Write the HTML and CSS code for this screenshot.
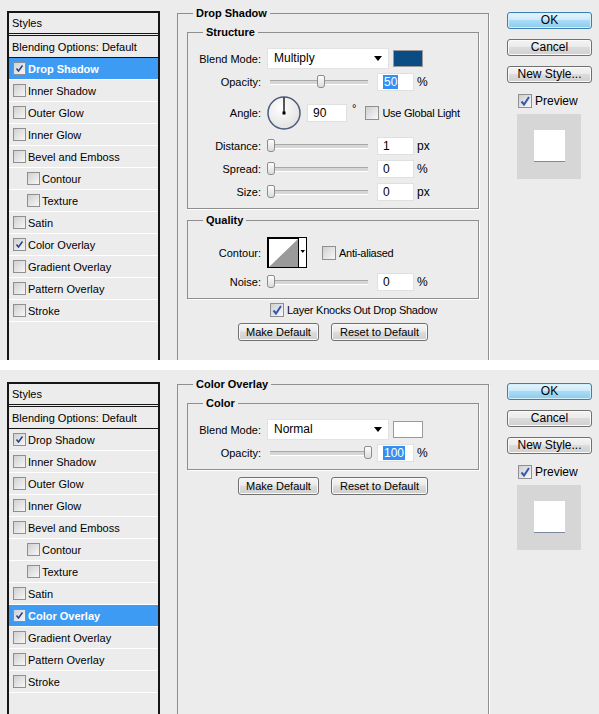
FILE: index.html
```html
<!DOCTYPE html>
<html>
	<head>
		<title>Layer Style</title>
		<link rel="stylesheet" href="styles.css">
	</head>
	<body>
		<!-- Drop Shadow page -->
		<div class="dialog first">
			<div class="styles-list">
				<div class="list-head">Styles</div>
				<div class="list-item blending">Blending Options: Default</div>
				<div class="list-item selected"><span class="cb"><svg width="11" height="11" viewBox="0 0 11 11"><path d="M2.5 5.5 L4.5 8 L8.5 2.5" fill="none" stroke="#27408b" stroke-width="1.5"/></svg></span>Drop Shadow</div>
				<div class="list-item"><span class="cb"></span>Inner Shadow</div>
				<div class="list-item"><span class="cb"></span>Outer Glow</div>
				<div class="list-item"><span class="cb"></span>Inner Glow</div>
				<div class="list-item"><span class="cb"></span>Bevel and Emboss</div>
				<div class="list-item indent"><span class="cb"></span>Contour</div>
				<div class="list-item indent"><span class="cb"></span>Texture</div>
				<div class="list-item"><span class="cb"></span>Satin</div>
				<div class="list-item"><span class="cb"><svg width="11" height="11" viewBox="0 0 11 11"><path d="M2.5 5.5 L4.5 8 L8.5 2.5" fill="none" stroke="#27408b" stroke-width="1.5"/></svg></span>Color Overlay</div>
				<div class="list-item"><span class="cb"></span>Gradient Overlay</div>
				<div class="list-item"><span class="cb"></span>Pattern Overlay</div>
				<div class="list-item"><span class="cb"></span>Stroke</div>
			</div>

			<div class="main">
				<fieldset class="group">
					<legend>Drop Shadow</legend>

					<fieldset class="sub">
						<legend>Structure</legend>
						<div class="row blend-row">
							<label>Blend Mode:</label>
							<div class="select">Multiply<span class="arrow"></span></div>
							<span class="swatch blue"></span>
						</div>
						<div class="row opacity-row">
							<label>Opacity:</label>
							<div class="slider"><span class="thumb" style="left:50px"></span></div>
							<span class="field"><span class="sel">50</span></span>
							<span class="unit">%</span>
						</div>
						<div class="row angle-row">
							<label>Angle:</label>
							<svg class="dial" width="34" height="34" viewBox="0 0 34 34">
								<defs>
									<radialGradient id="dialfill" cx="40%" cy="35%" r="70%">
										<stop offset="0" stop-color="#ffffff"/>
										<stop offset="1" stop-color="#e0e0e0"/>
									</radialGradient>
								</defs>
								<circle cx="17" cy="17" r="16" fill="url(#dialfill)" stroke="#4b5b7c" stroke-width="1.5"/>
								<line x1="17" y1="17" x2="17" y2="1.5" stroke="#000" stroke-width="1.3"/>
								<rect x="15.5" y="15.5" width="3" height="3" fill="#000"/>
							</svg>
							<span class="field wide">90</span>
							<span class="deg">°</span>
							<span class="check global"></span>
							<span class="check-label">Use Global Light</span>
						</div>
						<div class="row slider-row first-slider">
							<label>Distance:</label>
							<div class="slider"><span class="thumb" style="left:0px"></span></div>
							<span class="field">1</span>
							<span class="unit">px</span>
						</div>
						<div class="row slider-row">
							<label>Spread:</label>
							<div class="slider"><span class="thumb" style="left:0px"></span></div>
							<span class="field">0</span>
							<span class="unit">%</span>
						</div>
						<div class="row slider-row">
							<label>Size:</label>
							<div class="slider"><span class="thumb" style="left:0px"></span></div>
							<span class="field">0</span>
							<span class="unit">px</span>
						</div>
					</fieldset>

					<fieldset class="sub quality">
						<legend>Quality</legend>
						<div class="row contour-row">
							<label>Contour:</label>
							<svg class="contour" width="40" height="31" viewBox="0 0 40 31">
								<rect x="0.5" y="0.5" width="39" height="30" fill="#fff" stroke="#000"/>
								<rect x="1" y="1" width="30" height="1" fill="#000"/>
								<rect x="1" y="1" width="1" height="29" fill="#000"/>
								<polygon points="2,30 31,2 31,30" fill="#9a9a9a"/>
								<line x1="31.5" y1="1" x2="31.5" y2="30" stroke="#000"/>
								<polygon points="33.5,13 38,13 35.75,16" fill="#000"/>
							</svg>
							<span class="check aa"></span>
							<span class="check-label">Anti-aliased</span>
						</div>
						<div class="row slider-row">
							<label>Noise:</label>
							<div class="slider"><span class="thumb" style="left:0px"></span></div>
							<span class="field">0</span>
							<span class="unit">%</span>
						</div>
					</fieldset>

					<div class="knock-row">
						<span class="check"><svg width="12" height="12" viewBox="0 0 12 12"><path d="M2.5 6.5 L5 9.5 L10 2" fill="none" stroke="#3658ad" stroke-width="2"/></svg></span>
						<span class="check-label">Layer Knocks Out Drop Shadow</span>
					</div>
					<div class="button-row">
						<button class="btn make">Make Default</button>
						<button class="btn reset">Reset to Default</button>
					</div>
				</fieldset>
			</div>

			<div class="side">
				<button class="btn default">OK</button>
				<button class="btn">Cancel</button>
				<button class="btn">New Style...</button>
				<div class="preview-row">
					<span class="check"><svg width="12" height="12" viewBox="0 0 12 12"><path d="M2.5 6.5 L5 9.5 L10 2" fill="none" stroke="#3658ad" stroke-width="2"/></svg></span>
					<span class="preview-label">Preview</span>
				</div>
				<div class="preview"><div class="preview-square"></div></div>
			</div>
		</div>

		<!-- Color Overlay page -->
		<div class="dialog">
			<div class="styles-list">
				<div class="list-head">Styles</div>
				<div class="list-item blending">Blending Options: Default</div>
				<div class="list-item"><span class="cb"><svg width="11" height="11" viewBox="0 0 11 11"><path d="M2.5 5.5 L4.5 8 L8.5 2.5" fill="none" stroke="#27408b" stroke-width="1.5"/></svg></span>Drop Shadow</div>
				<div class="list-item"><span class="cb"></span>Inner Shadow</div>
				<div class="list-item"><span class="cb"></span>Outer Glow</div>
				<div class="list-item"><span class="cb"></span>Inner Glow</div>
				<div class="list-item"><span class="cb"></span>Bevel and Emboss</div>
				<div class="list-item indent"><span class="cb"></span>Contour</div>
				<div class="list-item indent"><span class="cb"></span>Texture</div>
				<div class="list-item"><span class="cb"></span>Satin</div>
				<div class="list-item selected"><span class="cb"><svg width="11" height="11" viewBox="0 0 11 11"><path d="M2.5 5.5 L4.5 8 L8.5 2.5" fill="none" stroke="#27408b" stroke-width="1.5"/></svg></span>Color Overlay</div>
				<div class="list-item"><span class="cb"></span>Gradient Overlay</div>
				<div class="list-item"><span class="cb"></span>Pattern Overlay</div>
				<div class="list-item"><span class="cb"></span>Stroke</div>
			</div>

			<div class="main">
				<fieldset class="group">
					<legend>Color Overlay</legend>

					<fieldset class="sub">
						<legend>Color</legend>
						<div class="row blend-row">
							<label>Blend Mode:</label>
							<div class="select">Normal<span class="arrow"></span></div>
							<span class="swatch"></span>
						</div>
						<div class="row opacity-row">
							<label>Opacity:</label>
							<div class="slider"><span class="thumb" style="left:97px"></span></div>
							<span class="field"><span class="sel">100</span></span>
							<span class="unit">%</span>
						</div>
					</fieldset>

					<div class="button-row short">
						<button class="btn make">Make Default</button>
						<button class="btn reset">Reset to Default</button>
					</div>
				</fieldset>
			</div>

			<div class="side">
				<button class="btn default">OK</button>
				<button class="btn">Cancel</button>
				<button class="btn">New Style...</button>
				<div class="preview-row">
					<span class="check"><svg width="12" height="12" viewBox="0 0 12 12"><path d="M2.5 6.5 L5 9.5 L10 2" fill="none" stroke="#3658ad" stroke-width="2"/></svg></span>
					<span class="preview-label">Preview</span>
				</div>
				<div class="preview"><div class="preview-square"></div></div>
			</div>
		</div>
	</body>
</html>
```

FILE: styles.css
```css
* {
	box-sizing: border-box;
}

body {
	margin: 0;
	background-color: #fff;
	font-family: "Liberation Sans", Arial, sans-serif;
	font-size: 11px;
	color: #000;
}

.dialog {
	display: flex;
	align-items: flex-start;
	height: 344px;
	overflow: hidden;
	background-color: #ececec;
}

.dialog.first {
	height: 361px;
	margin-top: -1px;
	margin-bottom: 10px;
}

/* left column */
.styles-list {
	margin: 12px 0 0 7px;
	width: 153px;
	height: 420px;
	border: 2px solid #161616;
	border-bottom: none;
}

.list-head {
	height: 23px;
	line-height: 20px;
	padding-left: 3px;
	border-bottom: 3px double #161616;
}

.list-item {
	display: flex;
	align-items: center;
	height: 22px;
	padding-left: 4px;
	border-bottom: 1px solid #fff;
}

.list-item.blending {
	padding-left: 3px;
	border-bottom-color: #161616;
}

.list-item.indent {
	padding-left: 18px;
}

.list-item.selected {
	background-color: #3d9bf3;
	color: #fff;
	font-weight: bold;
}

.cb {
	display: flex;
	align-items: center;
	justify-content: center;
	flex-shrink: 0;
	width: 13px;
	height: 13px;
	margin-right: 2px;
	border: 1px solid #8f8f8f;
	background: linear-gradient(135deg, #d0d0d0, #f7f7f7);
}

/* group boxes */
.main {
	margin: 7px 0 0 17px;
	width: 312px;
}

fieldset {
	margin: 0;
	min-width: 0;
	border: 1px solid #8e8e8e;
	box-shadow: 1px 1px 0 #fff;
}

legend {
	font-weight: bold;
	line-height: 14px;
	padding: 0 3px;
}

.group {
	height: 420px;
	padding: 0 9px;
}

.group > legend {
	margin-left: 6px;
}

.sub {
	margin-top: 5px;
	padding: 9px 0 7px 0;
}

.sub > legend {
	margin-left: 15px;
}

.sub.quality {
	margin-top: 4px;
	padding-top: 10px;
}

.row {
	display: flex;
	align-items: center;
	height: 19px;
	margin-top: 4px;
}

.row label {
	width: 73px;
	margin-right: 6px;
	text-align: right;
	flex-shrink: 0;
}

.blend-row {
	height: 21px;
	margin-top: 0;
}

.opacity-row {
	margin-top: 3px;
}

.angle-row {
	height: 34px;
	margin-top: 5px;
}

.first-slider {
	margin-top: 6px;
}

.contour-row {
	height: 31px;
	margin-top: 0;
}

/* controls */
.select {
	position: relative;
	width: 122px;
	height: 21px;
	line-height: 19px;
	padding-left: 6px;
	font-size: 12px;
	background-color: #fff;
	border: 1px solid #e2e2e2;
}

.arrow {
	position: absolute;
	right: 6px;
	top: 7px;
	border-left: 4px solid transparent;
	border-right: 4px solid transparent;
	border-top: 5px solid #000;
}

.swatch {
	width: 30px;
	height: 17px;
	margin-left: 4px;
	background-color: #fff;
	border: 1px solid #9a9a9a;
}

.swatch.blue {
	background-color: #0b4c85;
}

.slider {
	position: relative;
	width: 104px;
	height: 13px;
}

.slider::before {
	content: "";
	position: absolute;
	left: 3px;
	right: 3px;
	top: 5px;
	height: 3px;
	border-top: 1px solid #a8a8a8;
	border-bottom: 1px solid #fff;
	background-color: #d6d6d6;
}

.thumb {
	position: absolute;
	top: 0;
	width: 8px;
	height: 13px;
	border: 1px solid #8c8c8c;
	border-radius: 2px 2px 3px 3px;
	background: linear-gradient(#fdfdfd, #dcdcdc);
}

.field {
	width: 37px;
	height: 18px;
	margin-left: 6px;
	padding-left: 5px;
	line-height: 16px;
	font-size: 12px;
	background-color: #fff;
	border: 1px solid #e0e0e0;
}

.field.wide {
	width: 40px;
	margin-left: 6px;
}

.sel {
	background-color: #3390f0;
	color: #fff;
	padding: 0 1px;
}

.unit {
	margin-left: 3px;
	font-size: 12px;
}

.deg {
	margin-left: 5px;
	align-self: flex-start;
	margin-top: 6px;
}

.check {
	display: flex;
	align-items: center;
	justify-content: center;
	flex-shrink: 0;
	width: 14px;
	height: 14px;
	border: 1px solid #8f8f8f;
	background: linear-gradient(135deg, #cfcfcf, #f8f8f8);
}

.check.global {
	margin-left: 9px;
}

.check.aa {
	margin-left: 15px;
}

.check-label {
	margin-left: 3px;
	letter-spacing: -0.25px;
}

.preview-label {
	margin-left: 3px;
	font-size: 12px;
}

.knock-row {
	display: flex;
	align-items: center;
	height: 18px;
	margin: 2px 0 0 83px;
}

.button-row {
	display: flex;
	justify-content: center;
	gap: 12px;
	margin-top: 4px;
}

.button-row.short {
	margin-top: 7px;
}

.btn {
	height: 18px;
	padding: 0;
	font-family: "Liberation Sans", Arial, sans-serif;
	font-size: 12px;
	line-height: 16px;
	color: #000;
	border: 1px solid #707070;
	border-radius: 3px;
	background: linear-gradient(#f4f4f4, #ebebeb 45%, #dcdcdc 50%, #cfcfcf);
	box-shadow: inset 0 0 0 1px #fafafa;
}

.button-row .btn {
	font-size: 11px;
}

.btn.make {
	width: 81px;
}

.btn.reset {
	width: 97px;
}

/* right column */
.side {
	display: flex;
	flex-direction: column;
	margin: 13px 0 0 18px;
	width: 85px;
}

.side .btn {
	width: 85px;
	height: 17px;
	line-height: 15px;
	margin-bottom: 10px;
}

.btn.default {
	border-color: #3c7fb1;
	background: linear-gradient(#e6f5fd, #cdeafa 45%, #a9dbf6 50%, #8ccbed);
	box-shadow: inset 0 0 0 1px #d4effc;
}

.preview-row {
	display: flex;
	align-items: center;
	height: 15px;
	padding-left: 11px;
}

.preview {
	display: flex;
	justify-content: center;
	width: 64px;
	height: 65px;
	margin: 6px 0 0 10px;
	padding-top: 16px;
	background-color: #d6d6d6;
}

.preview-square {
	width: 31px;
	height: 31px;
	background-color: #fff;
	box-shadow: 0 1px 0 #7d8aa0;
}
```
